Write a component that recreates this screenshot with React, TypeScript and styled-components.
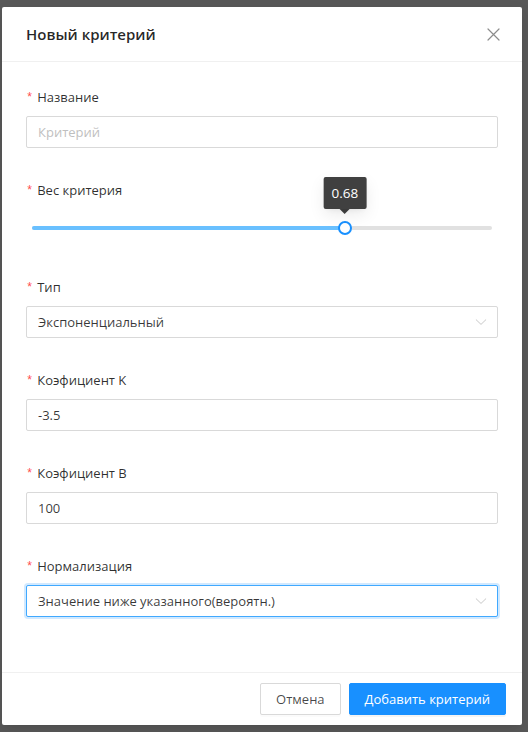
import React from "react";
import styled, { createGlobalStyle } from "styled-components";

const FONT = `"Open Sans", "Noto Sans", "Liberation Sans", sans-serif`;

const GlobalStyle = createGlobalStyle`
  html, body {
    margin: 0;
    padding: 0;
    background: #585858;
  }
  body {
    font-family: ${FONT};
    font-size: 13px;
    color: rgba(0, 0, 0, 0.85);
  }
  * { box-sizing: border-box; }
`;

const Page = styled.div`
  width: 528px;
  height: 732px;
  padding: 7px 6px 0 2px;
  overflow: hidden;
`;

const Modal = styled.div`
  width: 520px;
  background: #fff;
  border-radius: 2px;
  box-shadow: 0 3px 6px -4px rgba(0, 0, 0, 0.12), 0 6px 16px 0 rgba(0, 0, 0, 0.08);
`;

const Header = styled.div`
  display: flex;
  align-items: center;
  justify-content: space-between;
  padding: 16px 24px;
  border-bottom: 1px solid #f0f0f0;
`;

const Title = styled.div`
  font-size: 15px;
  font-weight: 600;
  line-height: 22px;
  color: rgba(0, 0, 0, 0.85);
`;

const CloseButton = styled.button`
  display: flex;
  align-items: center;
  justify-content: center;
  width: 14px;
  height: 22px;
  margin-right: -2px;
  border: 0;
  padding: 0;
  background: transparent;
  cursor: pointer;
  color: rgba(0, 0, 0, 0.45);
`;

const Body = styled.div`
  display: flex;
  flex-direction: column;
  gap: 31px;
  padding: 24px 24px 55px;
`;

const Item = styled.div``;

const Label = styled.div`
  display: flex;
  align-items: center;
  height: 22px;
  margin-bottom: 8px;
  font-size: 13px;
  line-height: 22px;
  color: rgba(0, 0, 0, 0.82);
`;

const Star = styled.span`
  color: #ff4d4f;
  font-family: "Liberation Mono", monospace;
  font-size: 12px;
  margin-right: 4px;
  line-height: 1;
  position: relative;
  top: 1px;
`;

const Field = styled.div<{ $focused?: boolean }>`
  display: flex;
  align-items: center;
  height: 32px;
  padding: 4px 11px;
  border: 1px solid ${(p) => (p.$focused ? "#40a9ff" : "#d9d9d9")};
  border-radius: 2px;
  background: #fff;
  box-shadow: ${(p) => (p.$focused ? "0 0 0 2px rgba(24, 144, 255, 0.2)" : "none")};
  font-size: 13px;
  line-height: 22px;
`;

const FieldText = styled.span<{ $placeholder?: boolean }>`
  flex: 1;
  color: ${(p) => (p.$placeholder ? "#bfbfbf" : "rgba(0, 0, 0, 0.78)")};
  white-space: nowrap;
`;

const Arrow = styled.span`
  display: flex;
  align-items: center;
  color: rgba(0, 0, 0, 0.22);
  margin-right: -1px;
`;

const SliderBox = styled.div`
  height: 36px;
  padding: 17px 6px 0;
`;

const Rail = styled.div`
  position: relative;
  height: 4px;
  border-radius: 2px;
  background: #e1e1e1;
`;

const Track = styled.div`
  height: 4px;
  border-radius: 2px;
  background: #69c0ff;
`;

const Handle = styled.div`
  position: absolute;
  top: -5px;
  width: 14px;
  height: 14px;
  margin-left: -7px;
  border: 2px solid #1890ff;
  border-radius: 50%;
  background: #fff;
`;

const Tooltip = styled.div`
  position: absolute;
  bottom: 21px;
  transform: translateX(-50%);
  padding: 6px 8px;
  height: 32px;
  font-size: 13.5px;
  line-height: 20px;
  color: #fff;
  background: rgba(0, 0, 0, 0.75);
  border-radius: 2px;
  box-shadow: 0 3px 6px -4px rgba(0, 0, 0, 0.12), 0 6px 16px 0 rgba(0, 0, 0, 0.08);
  white-space: nowrap;

  &::after {
    content: "";
    position: absolute;
    left: 50%;
    bottom: -5px;
    margin-left: -5px;
    border-left: 5px solid transparent;
    border-right: 5px solid transparent;
    border-top: 5px solid rgba(0, 0, 0, 0.75);
  }
`;

const Footer = styled.div`
  display: flex;
  justify-content: flex-end;
  gap: 8px;
  padding: 10px 16px;
  border-top: 1px solid #f0f0f0;
`;

const Button = styled.button<{ $primary?: boolean }>`
  height: 32px;
  padding: 4px 15px;
  font-family: ${FONT};
  font-size: 13px;
  line-height: 22px;
  border-radius: 2px;
  border: 1px solid ${(p) => (p.$primary ? "#1890ff" : "#d9d9d9")};
  background: ${(p) => (p.$primary ? "#1890ff" : "#fff")};
  color: ${(p) => (p.$primary ? "#fff" : "rgba(0, 0, 0, 0.72)")};
  box-shadow: ${(p) =>
    p.$primary ? "0 2px 0 rgba(0, 0, 0, 0.045)" : "0 2px 0 rgba(0, 0, 0, 0.015)"};
  cursor: pointer;
`;

const ChevronDown = () => (
  <svg width="12" height="12" viewBox="0 0 12 12" fill="none">
    <path d="M1.2 3.8 L6 8.4 L10.8 3.8" stroke="currentColor" strokeWidth="1" strokeLinecap="round" strokeLinejoin="round" />
  </svg>
);

const CloseIcon = () => (
  <svg width="13" height="13" viewBox="0 0 13 13" fill="none">
    <path d="M1 1 L12 12 M12 1 L1 12" stroke="currentColor" strokeWidth="1.2" strokeLinecap="round" />
  </svg>
);

type FieldDef = {
  label: string;
  kind: "input" | "select";
  value: string;
  placeholder?: boolean;
  focused?: boolean;
};

const fieldsAfter: FieldDef[] = [
  { label: "Тип", kind: "select", value: "Экспоненциальный" },
  { label: "Коэфициент K", kind: "input", value: "-3.5" },
  { label: "Коэфициент B", kind: "input", value: "100" },
  { label: "Нормализация", kind: "select", value: "Значение ниже указанного(вероятн.)", focused: true },
];

const FormLabel = ({ children }: { children: React.ReactNode }) => (
  <Label>
    <Star>*</Star>
    {children}
  </Label>
);

const FormField = ({ f }: { f: FieldDef }) => (
  <Item>
    <FormLabel>{f.label}</FormLabel>
    <Field $focused={f.focused}>
      <FieldText $placeholder={f.placeholder}>{f.value}</FieldText>
      {f.kind === "select" && (
        <Arrow>
          <ChevronDown />
        </Arrow>
      )}
    </Field>
  </Item>
);

export default function App() {
  const weight = 0.68;
  const pct = `${weight * 100}%`;
  return (
    <>
      <GlobalStyle />
      <Page>
        <Modal>
          <Header>
            <Title>Новый критерий</Title>
            <CloseButton aria-label="Закрыть">
              <CloseIcon />
            </CloseButton>
          </Header>
          <Body>
            <FormField f={{ label: "Название", kind: "input", value: "Критерий", placeholder: true }} />
            <Item>
              <FormLabel>Вес критерия</FormLabel>
              <SliderBox>
                <Rail>
                  <Track style={{ width: pct }} />
                  <Handle style={{ left: pct }} />
                  <Tooltip style={{ left: pct }}>{weight}</Tooltip>
                </Rail>
              </SliderBox>
            </Item>
            {fieldsAfter.map((f) => (
              <FormField key={f.label} f={f} />
            ))}
          </Body>
          <Footer>
            <Button>Отмена</Button>
            <Button $primary>Добавить критерий</Button>
          </Footer>
        </Modal>
      </Page>
    </>
  );
}
